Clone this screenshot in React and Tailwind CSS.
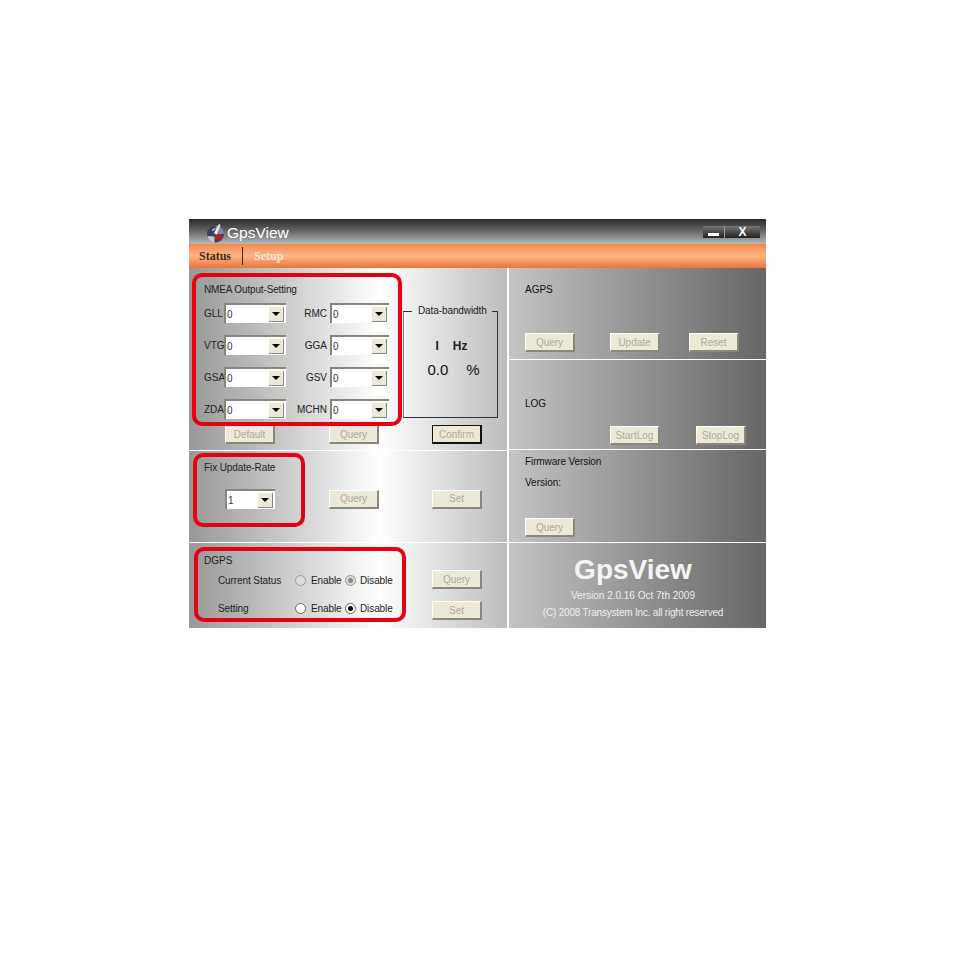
const font = { fontFamily: '"Liberation Sans", Arial, sans-serif' };

function Btn({ children, className = "" }) {
  return (
    <div
      className={
        "h-[19px] w-[50px] flex items-center justify-center bg-[#ece9d8] border-b-2 border-r-2 border-b-[#8a8878] border-r-[#8a8878] border-t border-l border-t-white border-l-white text-[10px] text-[#aca899] " +
        className
      }
    >
      {children}
    </div>
  );
}

function Combo({ value, w = "w-[62px]" }) {
  return (
    <div className={"h-[20px] bg-white flex items-center justify-between border-t-2 border-l-2 border-[#85857c] pr-[2px] " + w}>
      <span className="text-[10px] text-[#333] pl-[1px]">{value}</span>
      <div className="w-[15px] h-[15px] bg-[#ece9d8] border-b border-r border-[#8a8878] flex items-center justify-center">
        <div className="w-0 h-0 border-l-[4px] border-r-[4px] border-t-[4px] border-l-transparent border-r-transparent border-t-black" />
      </div>
    </div>
  );
}

function NmeaRow({ left, right }) {
  return (
    <div className="flex items-center h-[20px] text-[10px] text-[#222]">
      <span className="w-[20px] whitespace-nowrap">{left}</span>
      <Combo value="0" />
      <span className="w-[44px] text-right pr-[3px]">{right}</span>
      <Combo value="0" w="w-[59px]" />
    </div>
  );
}

function Radio({ checked, dim }) {
  return (
    <div className={"w-[11px] h-[11px] rounded-full border flex items-center justify-center " + (dim ? "border-[#999] bg-[#ddd]" : "border-[#666] bg-white")}>
      {checked && <div className={"w-[5px] h-[5px] rounded-full " + (dim ? "bg-[#8a8878]" : "bg-black")} />}
    </div>
  );
}

function RadioRow({ label, dim }) {
  return (
    <div className="flex items-center text-[10px] text-[#222] tracking-[-0.1px]">
      <span className="w-[77px]">{label}</span>
      <Radio dim={dim} />
      <span className="ml-[5px] w-[34px]">Enable</span>
      <Radio checked dim={dim} />
      <span className="ml-[4px]">Disable</span>
    </div>
  );
}

function Logo() {
  return (
    <svg width="19" height="20" viewBox="0 0 19 20">
      <circle cx="9.5" cy="11" r="8.5" fill="#39405a" />
      <path d="M9.5 2.5a8.5 8.5 0 0 1 8.5 8.5h-7z" fill="#7d8aa8" />
      <path d="M1.5 13a8.5 8.5 0 0 0 7 6.500v-6z" fill="#c4c8d4" />
      <circle cx="12.500" cy="14.500" r="3.500" fill="#b02028" />
      <path d="M8 10l5-9 1.500 1-4 10z" fill="#eeeeee" />
      <path d="M6 7l3-2 .5 1-3 2z" fill="#eeeeee" />
    </svg>
  );
}

export default function App() {
  return (
    <div className="w-[954px] h-[954px] bg-white pt-[219px] pl-[189px]" style={font}>
      <div className="relative w-[577px] h-[409px] flex flex-col">
        {/* title bar */}
        <div className="h-[25px] flex items-center justify-between bg-gradient-to-b from-[#2a2a2a] via-[#6a6a6a] to-[#b8b8b8]">
          <div className="flex items-center pl-[17px] gap-[2px] pt-[2px]">
            <Logo />
            <span className="text-[15.5px] text-white">GpsView</span>
          </div>
          <div className="flex mr-[6px] mt-[1px] h-[12px] w-[57px] bg-gradient-to-b from-[#777] to-[#222]">
            <div className="w-[22px] border-r border-[#999] flex items-center justify-center">
              <div className="w-[11px] h-[3px] bg-white mt-[4px]" />
            </div>
            <div className="flex-1 flex items-center justify-center text-[12px] font-bold leading-none text-white">X</div>
          </div>
        </div>
        {/* tabs */}
        <div className="h-[24px] flex items-center bg-gradient-to-b from-[#f08a4c] via-[#ffb384] to-[#e8743a] pl-[10px]" style={{ fontFamily: '"Liberation Serif", serif' }}>
          <span className="text-[12px] font-bold text-[#3a2a20]">Status</span>
          <div className="w-px h-[18px] bg-[#3a2a20] mx-[11px]" />
          <span className="text-[12px] font-bold text-[#ffe9d8]">Setup</span>
        </div>
        {/* body */}
        <div className="flex-1 grid grid-cols-[318px_1fr] gap-x-[2px] bg-white">
          <div className="flex flex-col gap-y-px">
            <div className="h-[182px] bg-gradient-to-r from-[#989898] via-white via-60% to-[#bdbdbd] flex flex-col">
              <div className="flex">
                <div className="pl-[15px] pt-[15px] w-[214px]">
                  <div className="text-[10px] text-[#222] h-[14px] leading-[14px] tracking-[-0.15px]">NMEA Output-Setting</div>
                  <div className="flex flex-col gap-[12px] mt-[6px]">
                    <NmeaRow left="GLL" right="RMC" />
                    <NmeaRow left="VTG" right="GGA" />
                    <NmeaRow left="GSA" right="GSV" />
                    <NmeaRow left="ZDA" right="MCHN" />
                  </div>
                </div>
                <div className="relative mt-[43px] w-[95px] h-[107px] border-r border-b border-l border-[#333] border-l-[#888]">
                  <div className="absolute -top-[5px] -left-px -right-px flex items-center">
                    <div className="w-[9px] h-px bg-[#333]" />
                    <span className="text-[10px] text-[#222] pl-[6px] pr-[5px] whitespace-nowrap leading-none tracking-[-0.1px]">Data-bandwidth</span>
                    <div className="flex-1 h-px bg-[#333]" />
                  </div>
                  <div className="flex justify-center gap-[14px] mt-[26px] pl-[2px] font-bold text-[12px] text-[#222]">
                    <span>I</span><span>Hz</span>
                  </div>
                  <div className="flex justify-center gap-[18px] mt-[4px] pl-[6px] text-[15px] text-[#111]">
                    <span>0.0</span><span>%</span>
                  </div>
                </div>
              </div>
              <div className="flex pl-[36px] mt-[6px]">
                <Btn>Default</Btn>
                <Btn className="ml-[54px]">Query</Btn>
                <Btn className="ml-[53px] border-2 !border-[#111]">Confirm</Btn>
              </div>
            </div>
            <div className="h-[91px] bg-gradient-to-r from-[#989898] via-white via-60% to-[#bdbdbd] flex flex-col">
              <div className="pl-[15px] pt-[9px] text-[10px] text-[#222] tracking-[-0.1px]">Fix Update-Rate</div>
              <div className="flex items-center pl-[36px] mt-[14px]">
                <Combo value="1" w="w-[50px]" />
                <Btn className="ml-[54px]">Query</Btn>
                <Btn className="ml-[53px]">Set</Btn>
              </div>
            </div>
            <div className="flex-1 bg-gradient-to-r from-[#989898] via-white via-60% to-[#bdbdbd] flex">
              <div className="pl-[15px] pt-[10px] w-[243px]">
                <div className="text-[10px] text-[#222]">DGPS</div>
                <div className="pl-[14px] mt-[5px] flex flex-col gap-[13px]">
                  <RadioRow label="Current Status" dim />
                  <RadioRow label="Setting" />
                </div>
              </div>
              <div className="flex flex-col gap-[12px] pt-[27px]">
                <Btn>Query</Btn>
                <Btn>Set</Btn>
              </div>
            </div>
          </div>
          <div className="flex flex-col gap-y-px">
            <div className="h-[91px] bg-gradient-to-r from-[#c4c4c4] to-[#666] pl-[16px] pt-[14px] flex flex-col">
              <div className="text-[10px] text-[#111]">AGPS</div>
              <div className="flex mt-[36px]">
                <Btn>Query</Btn>
                <Btn className="ml-[35px]">Update</Btn>
                <Btn className="ml-[29px]">Reset</Btn>
              </div>
            </div>
            <div className="h-[89px] bg-gradient-to-r from-[#c4c4c4] to-[#666] pl-[16px] pt-[36px] flex flex-col">
              <div className="text-[10px] text-[#111]">LOG</div>
              <div className="flex mt-[15px] pl-[85px]">
                <Btn>StartLog</Btn>
                <Btn className="ml-[36px]">StopLog</Btn>
              </div>
            </div>
            <div className="h-[92px] bg-gradient-to-r from-[#c4c4c4] to-[#666] pl-[16px] pt-[4px] flex flex-col">
              <div className="text-[10px] text-[#111] tracking-[-0.1px]">Firmware Version</div>
              <div className="text-[10px] text-[#111] mt-[6px]">Version:</div>
              <Btn className="mt-[28px]">Query</Btn>
            </div>
            <div className="flex-1 bg-gradient-to-r from-[#c4c4c4] to-[#666] flex flex-col items-center pt-[11px] pr-[9px]">
              <div className="text-[28px] leading-[32px] font-bold text-[#f4f4f4]">GpsView</div>
              <div className="text-[10px] leading-[14px] text-[#eeeeee] mt-[3px]">Version 2.0.16 Oct  7th 2009</div>
              <div className="text-[10px] leading-[14px] text-[#eeeeee] mt-[3px] tracking-[-0.2px]">(C) 2008 Transystem Inc. all right reserved</div>
            </div>
          </div>
        </div>
        {/* red annotation boxes */}
        <div className="absolute left-[3px] top-[54px] w-[210px] h-[153px] border-[4px] border-[#e60012] rounded-[10px]" />
        <div className="absolute left-[4px] top-[234px] w-[112px] h-[74px] border-[4px] border-[#e60012] rounded-[10px]" />
        <div className="absolute left-[5px] top-[328px] w-[212px] h-[75px] border-[4px] border-[#e60012] rounded-[10px]" />
      </div>
    </div>
  );
}
